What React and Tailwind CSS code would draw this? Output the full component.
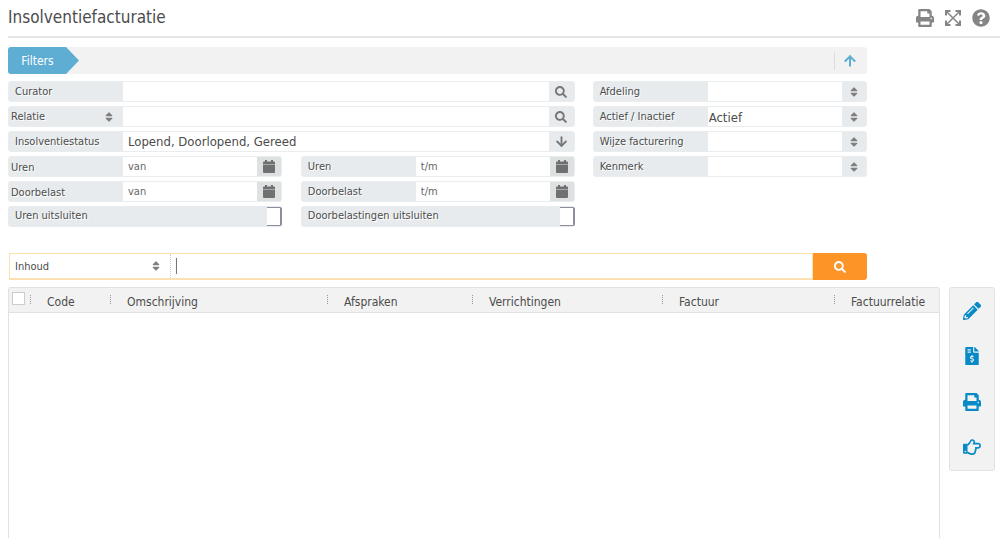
import React from 'react';
import {
    FaPrint,
    FaQuestionCircle,
    FaSearch,
    FaSort,
    FaPencilAlt,
    FaFileInvoiceDollar,
    FaRegHandPointRight,
} from 'react-icons/fa';
import { ArrowDown, ArrowUp } from 'lucide-react';
import clsx from 'clsx';

const columns = [
    { label: 'Code', width: 'w-[80px]' },
    { label: 'Omschrijving', width: 'w-[217px]' },
    { label: 'Afspraken', width: 'w-[145px]' },
    { label: 'Verrichtingen', width: 'w-[190px]' },
    { label: 'Factuur', width: 'w-[172px]' },
    { label: 'Factuurrelatie', width: '' },
];

const actions = [
    { label: 'Bewerken', icon: FaPencilAlt },
    { label: 'Factureren', icon: FaFileInvoiceDollar },
    { label: 'Afdrukken', icon: FaPrint },
    { label: 'Openen', icon: FaRegHandPointRight },
];

// Four arrows pointing to the corners
function ExpandIcon() {
    return (
        <svg viewBox="0 0 18 18" className="h-[18px] w-[18px]" fill="none" stroke="currentColor">
            <path strokeWidth="2" d="M2 6.500V2h4.500M11.500 2H16v4.500M16 11.500V16h-4.500M6.500 16H2v-4.500" />
            <path strokeWidth="1.500" d="M2.500 2.500l13 13M15.500 2.500l-13 13" />
        </svg>
    );
}

function CalendarIcon() {
    return (
        <svg viewBox="0 0 12 13" className="h-[13px] w-3" fill="currentColor">
            <path d="M2 0h2v1.500h4V0h2v1.500h1a1 1 0 0 1 1 1V4H0V2.500a1 1 0 0 1 1-1h1z" />
            <path d="M0 4.500h12V12a1 1 0 0 1-1 1H1a1 1 0 0 1-1-1z" />
        </svg>
    );
}

// Grey strip with a label on the left and the control next to it
function Field({ label, id, tight = false, className, children }) {
    return (
        <div className={clsx('flex h-[21px] overflow-hidden rounded-[3px] border border-[#e9edee] bg-[#e7ebed]', className)}>
            <label
                htmlFor={id}
                className={clsx('w-[114px] shrink-0 truncate [text-shadow:1px_1px_0_#fff]', tight ? 'pl-[2px] leading-[21px]' : 'pl-[6px] leading-[19px]')}
            >
                {label}
            </label>
            {children}
        </div>
    );
}

function LookupField({ label, id, value, icon }) {
    return (
        <Field label={label} id={id} className="col-span-2">
            <input id={id} defaultValue={value} className="min-w-0 flex-1 bg-white px-[5px] pt-px text-[13px] outline-none" />
            <button type="button" aria-label={label} className="flex w-[25px] items-center justify-center text-[#777]">
                {icon}
            </button>
        </Field>
    );
}

function DateField({ label, id, placeholder, tight }) {
    return (
        <Field label={label} id={id} tight={tight}>
            <input id={id} placeholder={placeholder} className="min-w-0 flex-1 bg-white px-[5px] pt-[2px] outline-none placeholder:text-[#666]" />
            <button type="button" aria-label={label} className="flex w-6 items-center justify-center bg-[#dde1e2] text-[#707070]">
                <CalendarIcon />
            </button>
        </Field>
    );
}

function CheckField({ label, id }) {
    return (
        <div className="flex h-[21px] items-center justify-between rounded-[3px] bg-[#e7ebed] pl-[7px]">
            <label htmlFor={id} className="[text-shadow:1px_1px_0_#fff]">{label}</label>
            <input
                id={id}
                type="checkbox"
                className="h-[19px] w-[15px] appearance-none rounded-r-[2px] border-y border-r-2 border-[#8f8ca0] bg-white"
            />
        </div>
    );
}

function SelectField({ label, id, value = '' }) {
    return (
        <Field label={label} id={id}>
            <select id={id} className="min-w-0 flex-1 appearance-none bg-white px-px pt-px text-[13px] outline-none">
                <option>{value}</option>
            </select>
            <span className="flex w-6 items-center justify-center pt-px text-[#808080]">
                <FaSort size={12} />
            </span>
        </Field>
    );
}

export default function App() {
    return (
        <div className="flex h-screen flex-col overflow-hidden bg-white pl-2 font-['DejaVu_Sans_Condensed','DejaVu_Sans',sans-serif] text-[11px] text-[#4c4c4c]">
            <header className="flex h-[38px] shrink-0 items-center justify-between border-b-2 border-[#e5e5e5] pr-[10px]">
                <h1 className="text-[17px]">Insolventiefacturatie</h1>
                <div className="flex items-center gap-[10px] text-[#858585]">
                    <button type="button" aria-label="Afdrukken"><FaPrint size={18} /></button>
                    <button type="button" aria-label="Volledig scherm"><ExpandIcon /></button>
                    <button type="button" aria-label="Help"><FaQuestionCircle size={18} /></button>
                </div>
            </header>

            <div className="mt-[9px] w-full max-w-[859px] shrink-0">
                <div className="flex h-[27px] items-center justify-between rounded-[3px] bg-[#f2f2f2]">
                    <button
                        type="button"
                        className="h-full w-[71px] rounded-l-[3px] bg-[#5eadd3] pr-[12px] text-[12px] text-white [clip-path:polygon(0_0,58px_0,100%_50%,58px_100%,0_100%)]"
                    >
                        Filters
                    </button>
                    <button type="button" aria-label="Inklappen" className="flex h-[18px] w-[33px] items-center border-l border-[#ddd] pl-[7px] text-[#5eadd3]">
                        <ArrowUp size={16} strokeWidth={3} />
                    </button>
                </div>

                <div className="mt-[7px] grid grid-cols-3 gap-x-[18px]">
                    <div className="col-span-2 grid grid-cols-2 content-start gap-x-[19px] gap-y-1">
                        <LookupField label="Curator" id="curator" icon={<FaSearch size={12} />} />
                        <div className="col-span-2 flex h-[21px] overflow-hidden rounded-[3px] border border-[#e9edee] bg-[#e7ebed]">
                            <div className="flex w-[114px] items-center">
                                <select aria-label="Zoeken op" className="min-w-0 flex-1 appearance-none pt-[2px] pl-[2px] outline-none [text-shadow:1px_1px_0_#fff]">
                                    <option>Relatie</option>
                                </select>
                                <FaSort size={12} className="mr-2 text-[#808080]" />
                            </div>
                            <input aria-label="Relatie" className="min-w-0 flex-1 bg-white px-[5px] text-[13px] outline-none" />
                            <button type="button" aria-label="Relatie zoeken" className="flex w-[25px] items-center justify-center text-[#777]">
                                <FaSearch size={12} />
                            </button>
                        </div>
                        <LookupField
                            label="Insolventiestatus"
                            id="status"
                            value="Lopend, Doorlopend, Gereed"
                            icon={<ArrowDown size={15} strokeWidth={3} />}
                        />
                        <DateField label="Uren" id="uren-van" placeholder="van" tight />
                        <DateField label="Uren" id="uren-tm" placeholder="t/m" />
                        <DateField label="Doorbelast" id="doorbelast-van" placeholder="van" tight />
                        <DateField label="Doorbelast" id="doorbelast-tm" placeholder="t/m" />
                        <CheckField label="Uren uitsluiten" id="uren-uitsluiten" />
                        <CheckField label="Doorbelastingen uitsluiten" id="doorbelastingen-uitsluiten" />
                    </div>
                    <div className="grid content-start gap-y-1">
                        <SelectField label="Afdeling" id="afdeling" />
                        <SelectField label="Actief / Inactief" id="actief" value="Actief" />
                        <SelectField label="Wijze facturering" id="wijze" />
                        <SelectField label="Kenmerk" id="kenmerk" />
                    </div>
                </div>

                <form className="mt-[26px] flex h-[27px] pl-px">
                    <div className="flex min-w-0 flex-1 items-center border border-b-2 border-[#fde0b0]">
                        <select aria-label="Zoekveld" className="w-[140px] appearance-none pt-[2px] pl-[5px] outline-none">
                            <option>Inhoud</option>
                        </select>
                        <FaSort size={12} className="text-[#808080]" />
                        <div className="ml-2 flex h-full min-w-0 flex-1 items-center border-l border-dotted border-[#ccc] pl-[5px]">
                            <span className="h-4 w-px bg-[#777]" />
                            <input aria-label="Zoekterm" className="min-w-0 flex-1 px-1 text-[13px] outline-none" />
                        </div>
                    </div>
                    <button type="submit" aria-label="Zoeken" className="flex w-[54px] items-center justify-center rounded-r-[3px] bg-[#fc9428] text-white">
                        <FaSearch size={12} />
                    </button>
                </form>
            </div>

            <div className="mt-[7px] flex min-h-0 flex-1 items-start gap-[9px] pr-[5px]">
                <div className="h-full min-w-0 flex-1 rounded-t-[3px] border border-b-0 border-[#e2e2e2]">
                    <table className="w-full table-fixed border-collapse">
                        <thead>
                            <tr className="h-6 border-b border-[#e2e2e2] bg-[#f2f2f2]">
                                <th className="w-[21px] p-0 pl-[3px] text-left">
                                    <input
                                        type="checkbox"
                                        aria-label="Alles selecteren"
                                        className="mb-[3px] block h-[13px] w-[13px] appearance-none border border-[#ccc] bg-white"
                                    />
                                </th>
                                {columns.map((column) => (
                                    <th key={column.label} className={clsx('p-0 text-left text-[12px] font-normal', column.width)}>
                                        <div className="flex h-5 items-start">
                                            <span className="mt-[5px] h-[9px] w-[17px] shrink-0 border-l border-dotted border-[#999]" />
                                            <span className="mt-1 leading-4">{column.label}</span>
                                        </div>
                                    </th>
                                ))}
                            </tr>
                        </thead>
                        <tbody />
                    </table>
                </div>

                <div className="flex h-[184px] w-[46px] flex-col items-center justify-around rounded-[3px] border border-[#e2e2e2] bg-[#f2f2f2] text-[#078ac6]">
                    {actions.map(({ label, icon: Icon }) => (
                        <button key={label} type="button" aria-label={label} title={label}>
                            <Icon size={18} />
                        </button>
                    ))}
                </div>
            </div>
        </div>
    );
}
